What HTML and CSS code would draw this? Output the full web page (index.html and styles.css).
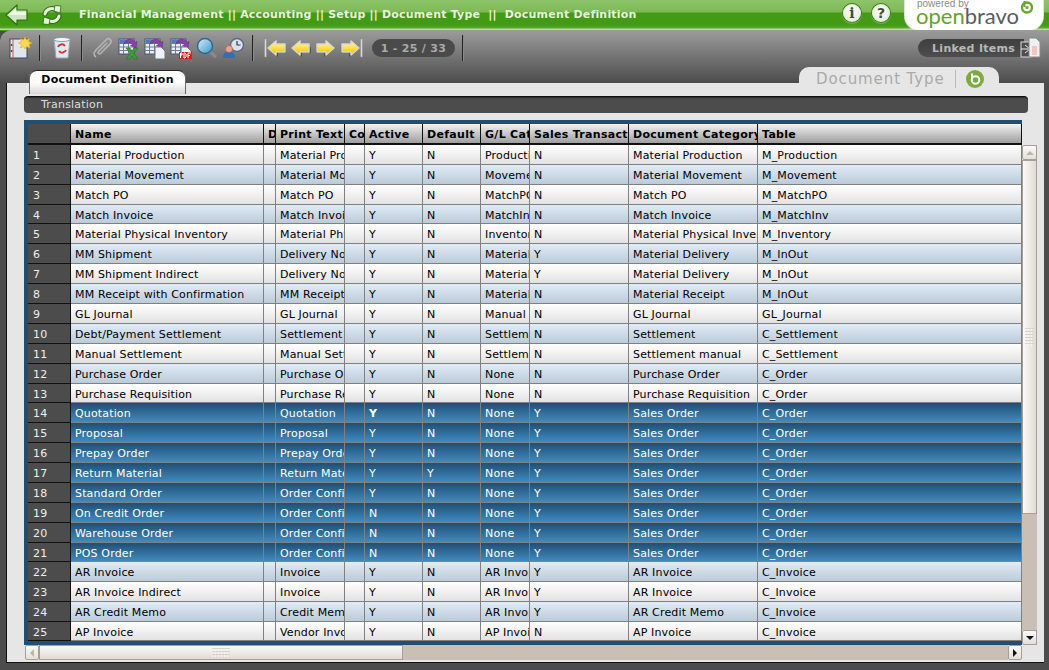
FILE: index.html
```html
<!DOCTYPE html>
<html>
<head>
<meta charset="utf-8">
<title>Document Definition</title>
<link rel="stylesheet" href="styles.css">
</head>
<body>
<svg class="defs" width="0" height="0">
  <defs>
    <linearGradient id="yel" x1="0" y1="0" x2="0" y2="1"><stop offset="0" stop-color="#fff6b0"/><stop offset="0.55" stop-color="#fbdc3c"/><stop offset="1" stop-color="#e8b010"/></linearGradient>
    <linearGradient id="lens" x1="0" y1="0" x2="1" y2="1"><stop offset="0" stop-color="#d8f0fa"/><stop offset="1" stop-color="#3f93c8"/></linearGradient>
    <g id="sheet">
      <rect x="1" y="2" width="15" height="15" fill="#e8eef6" stroke="#4a5568"/>
      <rect x="1.5" y="2.5" width="14" height="3.5" fill="#4f78c0"/>
      <path d="M1 6.5h15M1 10h15M1 13.5h15M5.5 2v15M10.500 2v15" stroke="#6c7c96" fill="none"/>
      <path d="M6 7c1-5 8-7 11-1.500l2-1-1 6.500-5.500-2.500 2-1C13 5.500 9 5 6 7z" fill="#8a3fb0" stroke="#5e2484" stroke-width=".5"/>
    </g>
    <g id="yarrow">
      <path d="M3 12 11 5v4h9v6h-9v4z" fill="#222" opacity=".45"/>
      <path d="M1 10 9 3v3h9v8H9v3z" fill="url(#yel)" stroke="#d8d8d0" stroke-width="1.500" stroke-linejoin="round"/>
    </g>
  </defs>
</svg>

<div class="head">
  <div class="topbar">
    <svg class="back" width="24" height="24" viewBox="0 0 24 24"><path d="M1 12 12 2v5h10v10H12v5z" fill="#cfe6c2" stroke="#2f6f12" stroke-width="1.200" stroke-linejoin="round"/><path d="M4 11.500 11 5.500V9h10v3H4z" fill="#eef8e8"/></svg>
    <svg class="refresh" width="22" height="22" viewBox="0 0 22 22"><g fill="none" stroke-linecap="round"><path d="M4 10c1-5 7-7 11-4" stroke="#2c6a10" stroke-width="5"/><path d="M18 12c-1 5-7 7-11 4" stroke="#2c6a10" stroke-width="5"/><path d="M4 10c1-5 7-7 11-4" stroke="#e2f3d8" stroke-width="3"/><path d="M18 12c-1 5-7 7-11 4" stroke="#e2f3d8" stroke-width="3"/></g><path d="M14 1.500 20 2l-1 7-6-2z" fill="#e2f3d8" stroke="#2c6a10" stroke-width=".8"/><path d="M8 20.500 2 20l1-7 6 2z" fill="#e2f3d8" stroke="#2c6a10" stroke-width=".8"/></svg>
    <div class="crumbs">Financial Management || Accounting || Setup || Document Type &nbsp;|| &nbsp;Document Definition</div>
    <div class="help-btn">i</div>
    <div class="help-btn help-q">?</div>
    <div class="logo">
      <div class="powered">powered by</div>
      <div class="wordmark"><span class="wm-green">open</span>bravo</div>
      <svg class="swirl" width="14" height="14" viewBox="0 0 14 14"><circle cx="7" cy="7.500" r="5" fill="none" stroke="#66a82c" stroke-width="2.400"/><circle cx="7" cy="7.500" r="1.500" fill="#66a82c"/><path d="M4.500 1v6" stroke="#66a82c" stroke-width="2"/></svg>
    </div>
  </div>
</div>

<div class="chrome">
  <div class="toolbar">
    <svg class="ico w23" viewBox="0 0 23 24"><rect x="1" y="3" width="17" height="19" fill="#dfe6f0" stroke="#3f4754"/><path d="M4 3v19" stroke="#d05050"/><circle cx="2.500" cy="9" r="1" fill="#444"/><circle cx="2.500" cy="15" r="1" fill="#444"/><path d="M16 1l1.500 3 3-1.500-1 3 3.500 1.500-3 1.500 1 3.500-3.500-1.500L16 13l-1.500-2.500-3 1.500 1-3.500-3-1.500 3-1.500-1-3 3 1.500z" fill="#fbd84a" stroke="#e9a818" stroke-width=".6"/></svg>
    <span class="sep sep-a"></span>
    <svg class="ico w18" viewBox="0 0 18 24"><path d="M1 3h16l-2 19H3z" fill="#dfe9f0" stroke="#9aa6b0"/><ellipse cx="9" cy="3.500" rx="8" ry="2" fill="#f3f7fa" stroke="#8e9aa4"/><path d="M5 11a4 4 0 0 1 7-1M13 14a4 4 0 0 1-7 1" fill="none" stroke="#d0382c" stroke-width="2"/></svg>
    <span class="sep sep-b"></span>
    <svg class="ico w22" viewBox="0 0 22 24"><path d="M4 21C1 19 2 16 4 14L14 4c3-3 7 0 4 4L9 17c-2 2-4 0-2-2l8-8" fill="none" stroke="#b4b4b4" stroke-width="1.600"/></svg>
    <svg class="ico w22 gap" viewBox="0 0 22 24"><use href="#sheet" y="1"/><path d="M8 12h4l2 3 2-3h4l-4 5 4 6h-4l-2-3-2 3H8l4-6z" fill="#3f9a3a" stroke="#1f6a1f" stroke-width=".5"/></svg>
    <svg class="ico w22 gap" viewBox="0 0 22 24"><use href="#sheet" y="1"/><path d="M11 11h6l4 4v8H11z" fill="#eef1f6" stroke="#6c7484"/></svg>
    <svg class="ico w22 gap" viewBox="0 0 22 24"><use href="#sheet" y="1"/><path d="M11 11h6l4 4v2H11z" fill="#eef1f6" stroke="#6c7484"/><rect x="9" y="16" width="13" height="7" fill="#d42020"/><path d="M10.500 22v-5h1.500v2h-1.500M14 17v5h1l1-1v-3l-1-1zM18 22v-5h3M18 19.500h2" fill="none" stroke="#fff"/></svg>
    <svg class="ico w22 gap" viewBox="0 0 22 24"><path d="M13 15l7 6" stroke="#8a8a8a" stroke-width="3"/><circle cx="9" cy="10" r="7.500" fill="url(#lens)" stroke="#2b6890" stroke-width="1.400"/></svg>
    <svg class="ico w22 gap" viewBox="0 0 22 24"><circle cx="15" cy="9" r="6.500" fill="#dce2ea" stroke="#5a6a80" stroke-width="1.400"/><path d="M15 5v4h3.500" fill="none" stroke="#2c3a50" stroke-width="1.200"/><path d="M1 22c0-4 2-7 6-7s6 3 6 7z" fill="#2f6fb8"/><circle cx="7" cy="13" r="3.500" fill="#eea090" stroke="#a05040" stroke-width=".5"/></svg>
    <span class="sep sep-c"></span>
    <svg class="ico w22" viewBox="0 0 22 24"><rect x="0.500" y="3" width="2" height="18" fill="#d8d8d8" stroke="#8c8c8c" stroke-width=".5"/><use href="#yarrow" x="3" y="2"/></svg>
    <svg class="ico w20 gap-n" viewBox="0 0 20 24"><use href="#yarrow" y="2"/></svg>
    <svg class="ico w20 gap-n" viewBox="0 0 20 24"><use href="#yarrow" transform="matrix(-1 0 0 1 19 2)"/></svg>
    <svg class="ico w22 gap-n" viewBox="0 0 22 24"><use href="#yarrow" transform="matrix(-1 0 0 1 19 2)"/><rect x="19.500" y="3" width="2" height="18" fill="#d8d8d8" stroke="#8c8c8c" stroke-width=".5"/></svg>
    <div class="pager">1 - 25 / 33</div>
    <span class="sep sep-d"></span>
    <div class="linked">Linked Items</div>
    <svg class="linked-ico" width="22" height="24" viewBox="0 0 22 24"><rect x="1" y="6" width="10" height="15" fill="#4e4e4e" stroke="#ddd"/><path d="M1 13h9M5 9l5 4-5 4" stroke="#eee" fill="none"/><path d="M9 2h7l4 4v15H9z" fill="#eef0f4" stroke="#8a8a8a"/><path d="M12 10h5v9h-5z" fill="#f2c6c0"/></svg>
  </div>
  <div class="tabs">
    <div class="tab-active">Document Definition</div>
    <div class="tab-parent">
      <span class="tab-parent-name">Document Type</span>
      <svg width="18" height="18" viewBox="0 0 18 18"><circle cx="9" cy="9" r="9" fill="#7bab3c"/><circle cx="9.500" cy="10" r="3.800" fill="none" stroke="#fff" stroke-width="2"/><path d="M6 3.500v6" stroke="#fff" stroke-width="2"/></svg>
    </div>
  </div>
</div>

<div class="panel">
  <div class="subtabs">Translation</div>
  <div class="grid-area">
    <div class="table-box">
      <table class="grid">
        <colgroup>
          <col class="c-n"><col class="c-name"><col class="c-d"><col class="c-print"><col class="c-co"><col class="c-act"><col class="c-def"><col class="c-gl"><col class="c-sales"><col class="c-doc"><col>
        </colgroup>
        <thead>
          <tr><th class="num"></th><th>Name</th><th>Description</th><th>Print Text</th><th>Comments</th><th>Active</th><th>Default</th><th>G/L Category</th><th>Sales Transaction</th><th>Document Category</th><th>Table</th></tr>
        </thead>
        <tbody>
          <tr><td class="num">1</td><td>Material Production</td><td></td><td>Material Production</td><td></td><td>Y</td><td>N</td><td>Production</td><td>N</td><td>Material Production</td><td>M_Production</td></tr>
          <tr class="alt"><td class="num">2</td><td>Material Movement</td><td></td><td>Material Movement</td><td></td><td>Y</td><td>N</td><td>Movement</td><td>N</td><td>Material Movement</td><td>M_Movement</td></tr>
          <tr><td class="num">3</td><td>Match PO</td><td></td><td>Match PO</td><td></td><td>Y</td><td>N</td><td>MatchPO</td><td>N</td><td>Match PO</td><td>M_MatchPO</td></tr>
          <tr class="alt short"><td class="num">4</td><td>Match Invoice</td><td></td><td>Match Invoice</td><td></td><td>Y</td><td>N</td><td>MatchInv</td><td>N</td><td>Match Invoice</td><td>M_MatchInv</td></tr>
          <tr><td class="num">5</td><td>Material Physical Inventory</td><td></td><td>Material Physical Inventory</td><td></td><td>Y</td><td>N</td><td>Inventory</td><td>N</td><td>Material Physical Inventory</td><td>M_Inventory</td></tr>
          <tr class="alt"><td class="num">6</td><td>MM Shipment</td><td></td><td>Delivery Note</td><td></td><td>Y</td><td>N</td><td>Material</td><td>Y</td><td>Material Delivery</td><td>M_InOut</td></tr>
          <tr><td class="num">7</td><td>MM Shipment Indirect</td><td></td><td>Delivery Note</td><td></td><td>Y</td><td>N</td><td>Material</td><td>Y</td><td>Material Delivery</td><td>M_InOut</td></tr>
          <tr class="alt"><td class="num">8</td><td>MM Receipt with Confirmation</td><td></td><td>MM Receipt</td><td></td><td>Y</td><td>N</td><td>Material</td><td>N</td><td>Material Receipt</td><td>M_InOut</td></tr>
          <tr><td class="num">9</td><td>GL Journal</td><td></td><td>GL Journal</td><td></td><td>Y</td><td>N</td><td>Manual</td><td>N</td><td>GL Journal</td><td>GL_Journal</td></tr>
          <tr class="alt"><td class="num">10</td><td>Debt/Payment Settlement</td><td></td><td>Settlement</td><td></td><td>Y</td><td>N</td><td>Settlement</td><td>N</td><td>Settlement</td><td>C_Settlement</td></tr>
          <tr><td class="num">11</td><td>Manual Settlement</td><td></td><td>Manual Settlement</td><td></td><td>Y</td><td>N</td><td>Settlement</td><td>N</td><td>Settlement manual</td><td>C_Settlement</td></tr>
          <tr class="alt"><td class="num">12</td><td>Purchase Order</td><td></td><td>Purchase Order</td><td></td><td>Y</td><td>N</td><td>None</td><td>N</td><td>Purchase Order</td><td>C_Order</td></tr>
          <tr class="short"><td class="num">13</td><td>Purchase Requisition</td><td></td><td>Purchase Requisition</td><td></td><td>Y</td><td>N</td><td>None</td><td>N</td><td>Purchase Requisition</td><td>C_Order</td></tr>
          <tr class="sel"><td class="num">14</td><td>Quotation</td><td></td><td>Quotation</td><td></td><td class="cursor">Y</td><td>N</td><td>None</td><td>Y</td><td>Sales Order</td><td>C_Order</td></tr>
          <tr class="sel"><td class="num">15</td><td>Proposal</td><td></td><td>Proposal</td><td></td><td>Y</td><td>N</td><td>None</td><td>Y</td><td>Sales Order</td><td>C_Order</td></tr>
          <tr class="sel"><td class="num">16</td><td>Prepay Order</td><td></td><td>Prepay Order</td><td></td><td>Y</td><td>N</td><td>None</td><td>Y</td><td>Sales Order</td><td>C_Order</td></tr>
          <tr class="sel"><td class="num">17</td><td>Return Material</td><td></td><td>Return Material</td><td></td><td>Y</td><td>Y</td><td>None</td><td>Y</td><td>Sales Order</td><td>C_Order</td></tr>
          <tr class="sel"><td class="num">18</td><td>Standard Order</td><td></td><td>Order Confirmation</td><td></td><td>Y</td><td>N</td><td>None</td><td>Y</td><td>Sales Order</td><td>C_Order</td></tr>
          <tr class="sel"><td class="num">19</td><td>On Credit Order</td><td></td><td>Order Confirmation</td><td></td><td>N</td><td>N</td><td>None</td><td>Y</td><td>Sales Order</td><td>C_Order</td></tr>
          <tr class="sel"><td class="num">20</td><td>Warehouse Order</td><td></td><td>Order Confirmation</td><td></td><td>N</td><td>N</td><td>None</td><td>Y</td><td>Sales Order</td><td>C_Order</td></tr>
          <tr class="sel short"><td class="num">21</td><td>POS Order</td><td></td><td>Order Confirmation</td><td></td><td>N</td><td>N</td><td>None</td><td>Y</td><td>Sales Order</td><td>C_Order</td></tr>
          <tr class="alt"><td class="num">22</td><td>AR Invoice</td><td></td><td>Invoice</td><td></td><td>Y</td><td>N</td><td>AR Invoice</td><td>Y</td><td>AR Invoice</td><td>C_Invoice</td></tr>
          <tr><td class="num">23</td><td>AR Invoice Indirect</td><td></td><td>Invoice</td><td></td><td>Y</td><td>N</td><td>AR Invoice</td><td>Y</td><td>AR Invoice</td><td>C_Invoice</td></tr>
          <tr class="alt"><td class="num">24</td><td>AR Credit Memo</td><td></td><td>Credit Memo</td><td></td><td>Y</td><td>N</td><td>AR Invoice</td><td>Y</td><td>AR Credit Memo</td><td>C_Invoice</td></tr>
          <tr class="short"><td class="num">25</td><td>AP Invoice</td><td></td><td>Vendor Invoice</td><td></td><td>Y</td><td>N</td><td>AP Invoice</td><td>N</td><td>AP Invoice</td><td>C_Invoice</td></tr>
        </tbody>
      </table>
    </div>
    <div class="vscroll">
      <div class="sb-btn sb-up"><span class="tri tri-up"></span></div>
      <div class="sb-thumb-v"><span class="grip grip-v"></span></div>
      <div class="sb-track"></div>
      <div class="sb-btn sb-down"><span class="tri tri-down"></span></div>
    </div>
    <div class="hscroll">
      <div class="sb-btn sb-left"><span class="tri tri-left"></span></div>
      <div class="sb-thumb-h"><span class="grip grip-h"></span></div>
      <div class="sb-track"></div>
      <div class="sb-btn sb-right"><span class="tri tri-right"></span></div>
    </div>
  </div>
</div>
</body>
</html>
```

FILE: styles.css
```css
html, body {
    margin: 0;
    padding: 0;
    height: 670px;
    overflow: hidden;
}
body {
    background: #4c4c4c;
    font-family: "DejaVu Sans", sans-serif;
    font-size: 11px;
    color: #000;
}
.defs {
    position: absolute;
}

/* green top bar */
.head {
    height: 31px;
    background: #449a14;
}
.topbar {
    display: flex;
    align-items: center;
    height: 30px;
    padding-left: 5px;
    background: linear-gradient(#8cc468 0, #7eb956 12px, #439a14 13px, #439a14 25px, #5aa832 28px, #b7dca0 29px);
    box-sizing: border-box;
}
.back {
    margin-top: -1px;
}
.refresh {
    margin-left: 12px;
    margin-top: -1px;
}
.crumbs {
    margin-left: 16px;
    width: 764px;
    margin-top: -2px;
    color: #e8f2e0;
    font-weight: bold;
    letter-spacing: 0.2px;
    white-space: nowrap;
}
.help-btn {
    width: 18px;
    height: 18px;
    margin-top: -4px;
    border-radius: 50%;
    background: radial-gradient(circle at 50% 40%, #fff, #d6e6cc);
    box-shadow: 0 0 0 1px #3b7d17, 0 1px 1px 1px #7ab85a;
    color: #3d5030;
    font: bold 14px/18px "DejaVu Serif", serif;
    text-align: center;
}
.help-q {
    margin-left: 11px;
    font-family: "DejaVu Sans", sans-serif;
}
.logo {
    position: relative;
    width: 138px;
    height: 30px;
    margin-left: 15px;
    border-radius: 0 0 14px 14px;
    background: #fff;
    box-shadow: 0 0 0 1px #d8ead0;
    overflow: hidden;
}
.powered {
    position: absolute;
    left: 12px;
    top: -2px;
    color: #8a8a8a;
    font: 10px/12px "Liberation Sans", sans-serif;
}
.wordmark {
    position: absolute;
    left: 11px;
    top: 3px;
    color: #5c5c5c;
    font: 22px/26px Lato, sans-serif;
}
.wm-green {
    color: #5fa52a;
}
.swirl {
    position: absolute;
    left: 115px;
    top: 0;
}

/* toolbar and tab strip share one grey gradient */
.chrome {
    height: 53px;
    margin-top: -1px;
    border-top-left-radius: 12px;
    background: linear-gradient(#9c9c9c, #4c4c4c);
    position: relative;
}
.toolbar {
    display: flex;
    align-items: center;
    height: 33px;
    padding: 3px 0 0 9px;
    box-sizing: border-box;
}
.ico {
    height: 24px;
    flex: none;
}
.w18 { width: 18px; }
.w20 { width: 20px; }
.w22 { width: 22px; }
.w23 { width: 23px; }
.gap { margin-left: 4px; }
.gap-n { margin-left: 5px; }
.sep {
    width: 1px;
    height: 26px;
    flex: none;
    background: #222;
    box-shadow: 1px 0 0 #8a8a8a;
}
.sep-a { margin: 0 13px 0 7px; }
.sep-b { margin: 0 10px 0 10px; }
.sep-c { margin: 0 11px 0 8px; }
.sep-d { margin-left: 7px; }
.pager {
    width: 83px;
    height: 18px;
    margin-left: 9px;
    border-radius: 9px;
    background: #4a4a4a;
    color: #aaa;
    font-weight: bold;
    line-height: 19px;
    letter-spacing: 0.3px;
    text-align: center;
}
.linked {
    width: 106px;
    height: 18px;
    margin-left: 455px;
    padding-left: 14px;
    box-sizing: border-box;
    border-radius: 9px 0 0 9px;
    background: linear-gradient(#3e3e3e, #4e4e4e);
    color: #b8b8b8;
    font-weight: bold;
    line-height: 19px;
    letter-spacing: 0.3px;
}
.linked-ico {
    margin-left: -4px;
    flex: none;
}
.tabs {
    display: flex;
    justify-content: space-between;
    align-items: flex-start;
    height: 20px;
    padding: 4px 50px 0 30px;
    box-sizing: border-box;
}
.tab-active {
    position: relative;
    z-index: 2;
    width: 155px;
    height: 24px;
    margin-top: 3px;
    padding-top: 2px;
    box-sizing: border-box;
    border-top: 1px solid #222;
    border-radius: 7px 7px 0 0;
    background: linear-gradient(#fff, #fff 50%, #d6d6d6);
    box-shadow: 1px 0 0 #666, -1px 0 0 #666;
    font-weight: bold;
    letter-spacing: 0.23px;
    text-align: center;
}
.tab-parent {
    position: relative;
    z-index: 2;
    display: flex;
    align-items: center;
    width: 200px;
    height: 24px;
    padding-left: 17px;
    box-sizing: border-box;
    border-radius: 10px 10px 0 0;
    background: #e6e6e6;
    color: #aaa;
    font-size: 15px;
}
.tab-parent-name {
    padding-right: 10px;
    margin-right: 10px;
    border-right: 1px solid #bbb;
    letter-spacing: 0.9px;
}

/* content */
.panel {
    position: relative;
    height: 580px;
    margin: 0 5px 0 6px;
    padding: 13px 16px 0 17px;
    box-sizing: border-box;
    border-left: 1px solid #111;
    border-bottom: 1px solid #111;
    background: #e6e6e6;
}
.subtabs {
    position: relative;
    z-index: 3;
    height: 17px;
    padding-left: 17px;
    margin-bottom: 7px;
    box-sizing: border-box;
    border-top: 1px solid #111;
    border-radius: 4px;
    background: #4c4c4c;
    box-shadow: inset 0 1px 1px #2c2c2c;
    color: #ddd;
    line-height: 16px;
    letter-spacing: 0.2px;
}
.grid-area {
    display: grid;
    grid-template-columns: 998px 15px;
    grid-template-rows: 525px 15px;
}
.table-box {
    width: 998px;
    height: 525px;
    border-top: 4px solid #1f4f74;
    border-bottom: 4px solid #1f4f74;
    border-left: 4px solid #1f4f74;
    box-sizing: border-box;
    overflow: hidden;
}
.grid {
    width: 994px;
    table-layout: fixed;
    border-collapse: separate;
    border-spacing: 0;
}
.c-n { width: 43px; }
.c-name { width: 193px; }
.c-d { width: 12px; }
.c-print { width: 69px; }
.c-co { width: 20px; }
.c-act { width: 58px; }
.c-def { width: 58px; }
.c-gl { width: 49px; }
.c-sales { width: 99px; }
.c-doc { width: 129px; }

.grid th {
    height: 21px;
    padding: 1px 0 0 4px;
    box-sizing: border-box;
    border-right: 1px solid #111;
    border-bottom: 2px solid #111;
    background: linear-gradient(#f2f2f2, #9e9e9e);
    font-weight: bold;
    letter-spacing: 0.3px;
    text-align: left;
    white-space: nowrap;
    overflow: hidden;
}
.grid th.num {
    background: #4c4c4c;
}
.grid td {
    height: 20px;
    padding: 1px 0 0 4px;
    box-sizing: border-box;
    border-right: 1px solid #808080;
    border-bottom: 1px solid #808080;
    background: linear-gradient(#fff, #e2e2e2);
    letter-spacing: 0.15px;
    white-space: nowrap;
    overflow: hidden;
}
.grid tr.short td {
    height: 19px;
    padding-top: 2px;
}
.grid tr.alt td {
    background: linear-gradient(#e0ecf6, #bccbd9);
}
.grid tr.sel td {
    background: linear-gradient(#1f4f74, #418abf);
    color: #fff;
}
.grid tr td.num {
    padding-left: 5px;
    border-right: 1px solid #111;
    border-bottom: 1px solid #111;
    background: #4c4c4c;
    color: #eee;
}
.grid tr.sel td.cursor {
    font-weight: bold;
}

/* scrollbars */
.vscroll {
    display: flex;
    flex-direction: column;
    height: 500px;
    margin-top: 25px;
    box-shadow: inset -1px 0 0 #aaa29a;
}
.hscroll {
    display: flex;
    height: 15px;
    width: 997px;
    margin-left: 1px;
}
.sb-btn {
    display: flex;
    align-items: center;
    justify-content: center;
    flex: none;
    width: 15px;
    height: 15px;
    box-sizing: border-box;
    border: 1px solid #a89f94;
    border-radius: 2px;
    background: linear-gradient(#fbfaf8, #e4e0da);
}
.sb-left {
    width: 14px;
}
.sb-right {
    width: 14px;
}
.sb-track {
    flex: 1;
    background: #c9bfb4;
}
.sb-thumb-v {
    display: flex;
    align-items: center;
    justify-content: center;
    height: 354px;
    box-sizing: border-box;
    border: 1px solid #a89f94;
    background: linear-gradient(90deg, #fbfaf8, #e0dbd4);
}
.sb-thumb-h {
    display: flex;
    align-items: center;
    justify-content: center;
    width: 364px;
    box-sizing: border-box;
    border: 1px solid #a89f94;
    background: linear-gradient(#fbfaf8, #e0dbd4);
}
.grip {
    display: block;
    background-image: linear-gradient(#d8d2ca 1px, transparent 1px), linear-gradient(90deg, #f8f6f3 1px, transparent 1px);
    background-size: 3px 3px;
}
.grip-v {
    width: 9px;
    height: 18px;
}
.grip-h {
    width: 18px;
    height: 9px;
}
.tri {
    width: 0;
    height: 0;
    border: 4px solid transparent;
}
.tri-up {
    margin-top: -4px;
    border-bottom-color: #bdb6ad;
}
.tri-down {
    margin-top: 4px;
    border-top-color: #111;
}
.tri-left {
    margin-left: -4px;
    border-right-color: #bdb6ad;
}
.tri-right {
    margin-left: 4px;
    border-left-color: #111;
}
```
